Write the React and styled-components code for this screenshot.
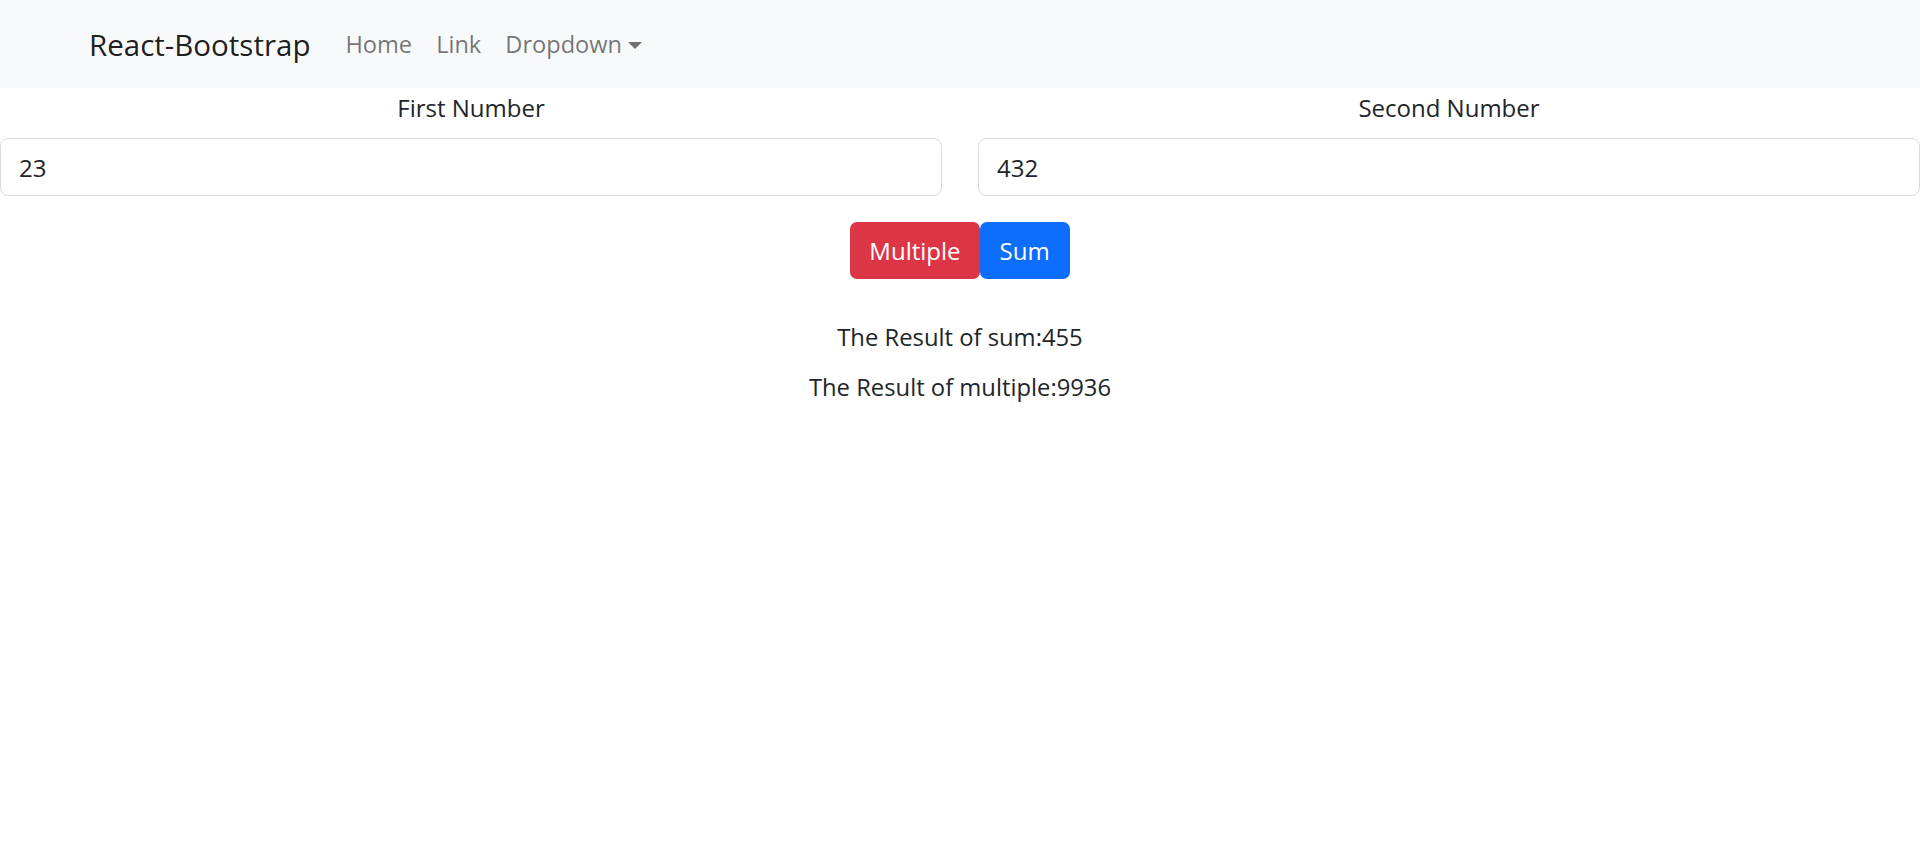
import React from 'react';
import styled, { createGlobalStyle } from 'styled-components';

const GlobalStyle = createGlobalStyle`
    body {
        margin: 0;
        font-family: "Open Sans", "Liberation Sans", sans-serif;
        color: #212529;
        background: #fff;
    }
    * {
        box-sizing: border-box;
    }
`;

const Navbar = styled.nav`
    display: flex;
    align-items: center;
    height: 88px;
    padding-left: 89px;
    background: #f8f9fa;
`;

const Brand = styled.a`
    font-size: 29.5px;
    line-height: 45px;
    color: rgba(0, 0, 0, 0.9);
    margin-right: 23px;
    text-decoration: none;
`;

const NavLink = styled.a`
    display: inline-flex;
    align-items: center;
    font-size: 23.6px;
    line-height: 36px;
    padding: 0 12px;
    color: rgba(0, 0, 0, 0.55);
    text-decoration: none;
`;

const Caret = styled.span`
    display: inline-block;
    margin-left: 6px;
    margin-top: 2px;
    border-top: 7px solid rgba(0, 0, 0, 0.55);
    border-left: 7px solid transparent;
    border-right: 7px solid transparent;
`;

const FormRow = styled.div`
    display: grid;
    grid-template-columns: 1fr 1fr;
    column-gap: 36px;
`;

const Field = styled.div`
    display: flex;
    flex-direction: column;
`;

const Label = styled.label`
    margin: 2px 0 12px;
    font-size: 24px;
    line-height: 36px;
    text-align: center;
`;

const Input = styled.input`
    width: 100%;
    height: 58px;
    padding: 0 18px;
    font-family: inherit;
    font-size: 24px;
    color: #212529;
    border: 1.5px solid #d6dadf;
    border-radius: 8px;
    outline: none;
`;

const ButtonRow = styled.div`
    display: flex;
    justify-content: center;
    margin-top: 26px;
`;

const Button = styled.button`
    padding: 0 ${(p) => (p.$variant === 'danger' ? '19px' : '20px')};
    height: 57px;
    font-family: inherit;
    font-size: 24px;
    color: #fff;
    border: none;
    border-radius: 7px;
    background: ${(p) => (p.$variant === 'danger' ? '#dc3545' : '#0d6efd')};
    cursor: pointer;
`;

const Results = styled.div`
    display: flex;
    flex-direction: column;
    align-items: center;
    gap: 14px;
    margin-top: 40px;
`;

const ResultLine = styled.div`
    font-size: 23.8px;
    line-height: 36px;
`;

const App = () => {
    const first = 23;
    const second = 432;

    return (
        <>
            <GlobalStyle />
            <Navbar>
                <Brand href="#">React-Bootstrap</Brand>
                <NavLink href="#">Home</NavLink>
                <NavLink href="#">Link</NavLink>
                <NavLink href="#">
                    Dropdown
                    <Caret />
                </NavLink>
            </Navbar>
            <FormRow>
                <Field>
                    <Label>First Number</Label>
                    <Input defaultValue={first} />
                </Field>
                <Field>
                    <Label>Second Number</Label>
                    <Input defaultValue={second} />
                </Field>
            </FormRow>
            <ButtonRow>
                <Button $variant="danger">Multiple</Button>
                <Button>Sum</Button>
            </ButtonRow>
            <Results>
                <ResultLine>The Result of sum:{first + second}</ResultLine>
                <ResultLine>The Result of multiple:{first * second}</ResultLine>
            </Results>
        </>
    );
};

export default App;
